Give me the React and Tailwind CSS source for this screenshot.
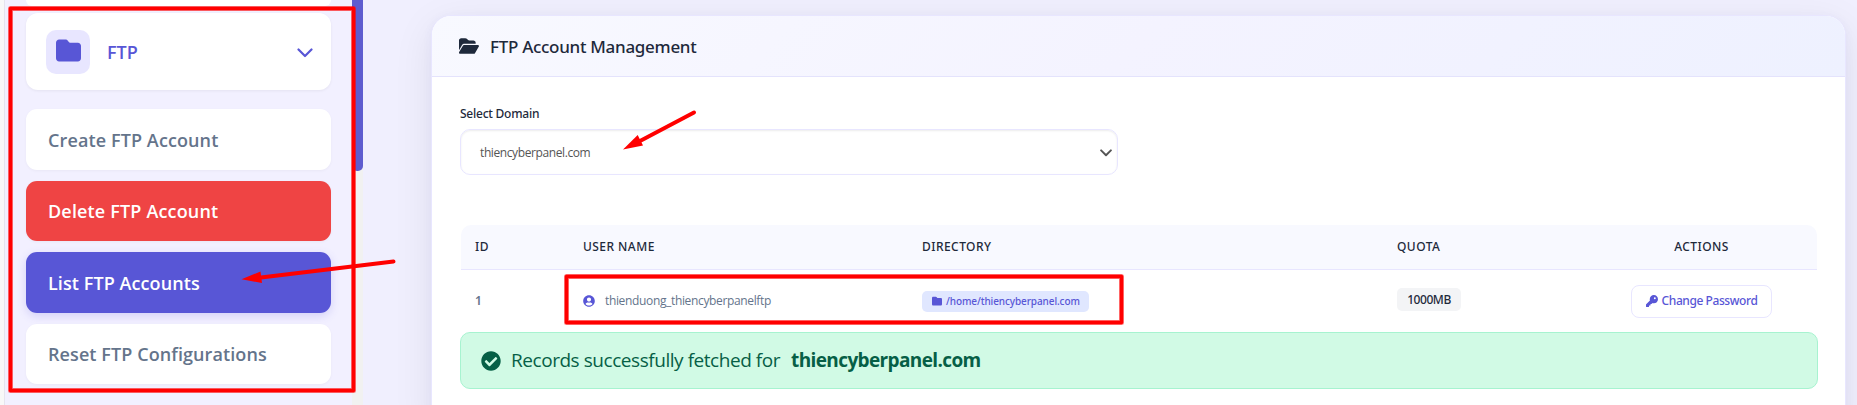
import { FaFolder, FaFolderOpen, FaKey } from "react-icons/fa6";
import { FaCheckCircle, FaUserCircle } from "react-icons/fa";

const menu = [
  { label: "Create FTP Account", look: "h-[61px] bg-white text-[#64748b] tracking-[0.11px] shadow-[0_1px_3px_rgba(0,0,0,0.04)]" },
  { label: "Delete FTP Account", look: "h-[60px] bg-[#ef4444] text-white tracking-[0.16px] shadow-[0_1px_3px_rgba(0,0,0,0.04)]" },
  { label: "List FTP Accounts", look: "h-[61px] bg-[#5856d6] text-white tracking-[0.08px] shadow-[0_3px_10px_rgba(88,86,214,0.2)]" },
  { label: "Reset FTP Configurations", look: "h-[60px] bg-white text-[#64748b] tracking-[0.09px] shadow-[0_1px_3px_rgba(0,0,0,0.04)]" },
];

function Chevron({ className, width }) {
  return (
    <svg viewBox="0 0 16 10" fill="none" stroke="currentColor" strokeWidth={width} strokeLinecap="round" strokeLinejoin="round" className={className}>
      <path d="M1.5 1.5 8 8l6.500-6.500" />
    </svg>
  );
}

function Sidebar() {
  return (
    <aside className="flex h-full w-[352px] shrink-0 flex-col overflow-hidden border-l border-[#e6e4ee] bg-[#f2f0ff] pl-[21px] pr-[21px]">
      <div className="h-[6px] w-[305px] shrink-0 rounded-b-[10px] bg-white" />
      <div className="mt-[7px] flex h-[77px] w-[305px] shrink-0 items-center rounded-[12px] bg-white pr-[18px] pl-5 text-[#5856d6] shadow-[0_1px_3px_rgba(0,0,0,0.06)]">
        <div className="flex size-[44px] items-center justify-center rounded-[10px] bg-[#e8e6ff]">
          <FaFolder className="mb-[3px] size-[25px]" />
        </div>
        <span className="ml-[17px] text-[18px] leading-6 font-semibold">FTP</span>
        <Chevron className="mt-[2px] ml-auto h-[10px] w-4" width="2.2" />
      </div>
      <nav className="mt-[19px] flex w-[305px] flex-col gap-[11px]">
        {menu.map((m) => (
          <div key={m.label} className={`flex shrink-0 items-center rounded-[11px] pl-[22px] text-[18px] leading-6 font-semibold ${m.look}`}>
            {m.label}
          </div>
        ))}
      </nav>
    </aside>
  );
}

function Accounts() {
  const cols = "grid grid-cols-[108px_339px_475px_234px_141px] items-center pl-[14px]";
  return (
    <div className="mt-[50px] ml-px w-[1356px] text-[12px]">
      <div className={`${cols} h-[45px] rounded-t-[10px] border-b border-[#e8e6ff] bg-[#f8f9ff] font-['Noto_Sans',sans-serif] font-medium tracking-[0.45px] text-[#1e293b]`}>
        <span>ID</span>
        <span>USER NAME</span>
        <span>DIRECTORY</span>
        <span>QUOTA</span>
        <span className="text-center">ACTIONS</span>
      </div>
      <div className={`${cols} h-[62px] text-[#64748b]`}>
        <span className="font-['Noto_Sans',sans-serif] font-semibold">1</span>
        <span className="flex items-center">
          <FaUserCircle className="mr-[10px] size-3 text-[#5856d6]" />
          <span className="tracking-[-0.35px]">thienduong_thiencyberpanelftp</span>
        </span>
        <span className="flex h-[21px] w-[167px] items-center rounded-[5px] bg-[#e0e7ff] pl-[10px] font-['Noto_Sans',sans-serif] text-[10px] font-medium tracking-[-0.1px] text-[#5856d6]">
          <FaFolder className="mr-1 size-[10px]" />
          /home/thiencyberpanel.com
        </span>
        <span className="mb-[3px] flex h-[23px] w-[64px] items-center justify-center rounded-[5px] bg-[#f3f4f6] font-['Noto_Sans',sans-serif] font-medium tracking-[-0.45px] text-[#1e293b]">1000MB</span>
        <span className="flex h-[33px] w-[141px] items-center justify-center rounded-[8px] border border-[#e8e6ff] bg-white font-['Noto_Sans',sans-serif] font-medium text-[#5856d6]">
          <FaKey className="mr-1 size-3" />
          <span className="tracking-[-0.42px]">Change Password</span>
        </span>
      </div>
    </div>
  );
}

function Panel() {
  return (
    <section className="h-[420px] w-[1415px] overflow-hidden rounded-[20px] border border-[#e8e6ff] bg-white shadow-[0_10px_40px_rgba(0,0,0,0.08),0_2px_10px_rgba(88,86,214,0.05)]">
      <header className="flex h-[61px] items-center border-b border-[#e4e3fc] bg-linear-135 from-[#f8f9ff] via-[#f4f3ff] to-[#eef1ff] pl-[27px] text-[#1e293b]">
        <FaFolderOpen className="mb-[1px] h-[18px] w-5" />
        <h1 className="mt-[2px] ml-[11px] font-['Noto_Sans',sans-serif] text-[17px] leading-6 font-medium tracking-[-0.29px]">FTP Account Management</h1>
      </header>
      <div className="pt-[28px] pl-[28px]">
        <div className="font-['Noto_Sans',sans-serif] text-[12px] leading-[18px] font-medium tracking-[-0.24px] text-[#1e293b]">Select Domain</div>
        <div className="mt-[6px] flex h-[46px] w-[658px] items-center justify-between rounded-[10px] border border-[#e8e6ff] pr-[5px] pl-[19px] text-[12px] text-[#555] shadow-[inset_0_1px_2px_rgba(0,0,0,0.08)]">
          <span className="mt-px tracking-[-0.4px]">thiencyberpanel.com</span>
          <Chevron className="mt-px h-[8px] w-[12px]" width="2.600" />
        </div>
        <Accounts />
        <div className="flex h-[57px] w-[1358px] items-center rounded-[10px] border border-[#a7f3d0] bg-[#d1fae5] pl-5 text-[19px] text-[#065f46]">
          <FaCheckCircle className="mr-[10px] size-5" />
          <span className="tracking-[-0.45px]">Records successfully fetched for</span>
          <strong className="ml-[11px] font-bold tracking-[-0.62px]">thiencyberpanel.com</strong>
        </div>
      </div>
    </section>
  );
}

function Marks() {
  return (
    <svg viewBox="0 0 1857 405" className="pointer-events-none absolute inset-0 h-[405px] w-[1857px]" fill="none" strokeLinejoin="round">
      <g stroke="#ff0000" strokeOpacity="0.5" strokeWidth="5">
        <rect x="10.500" y="8.500" width="343" height="382" />
        <rect x="566.500" y="276.500" width="555" height="46" />
      </g>
      <g stroke="#ff0000" strokeWidth="3.400">
        <rect x="10.500" y="8.500" width="343" height="382" />
        <rect x="566.500" y="276.500" width="555" height="46" />
      </g>
      <g stroke="#ff0000" strokeWidth="4" strokeLinecap="round">
        <path d="M694 112.500 640 141" />
        <path d="M393.500 261.500 261 277.500" />
      </g>
      <g fill="#ff0000">
        <path d="M623 149.500 637.700 135 643 145.500Z" />
        <path d="M241.500 279.300 260.500 271.500 262 283Z" />
      </g>
    </svg>
  );
}

export default function App() {
  return (
    <div className="relative flex h-[405px] w-[1857px] overflow-hidden bg-[#f0effe] font-['Open_Sans',sans-serif]">
      <div className="flex h-full w-[356px] shrink-0 bg-[#f8f8f8] pl-1">
        <Sidebar />
      </div>
      <div className="-ml-1 h-full w-[11px] shrink-0 bg-[#f1f1f1]">
        <div className="h-[171px] rounded-b-[5px] bg-[#5e5ccf]" />
      </div>
      <main className="relative flex-1 overflow-hidden pt-[15px] pl-[68px]">
        <Panel />
      </main>
      <Marks />
    </div>
  );
}
